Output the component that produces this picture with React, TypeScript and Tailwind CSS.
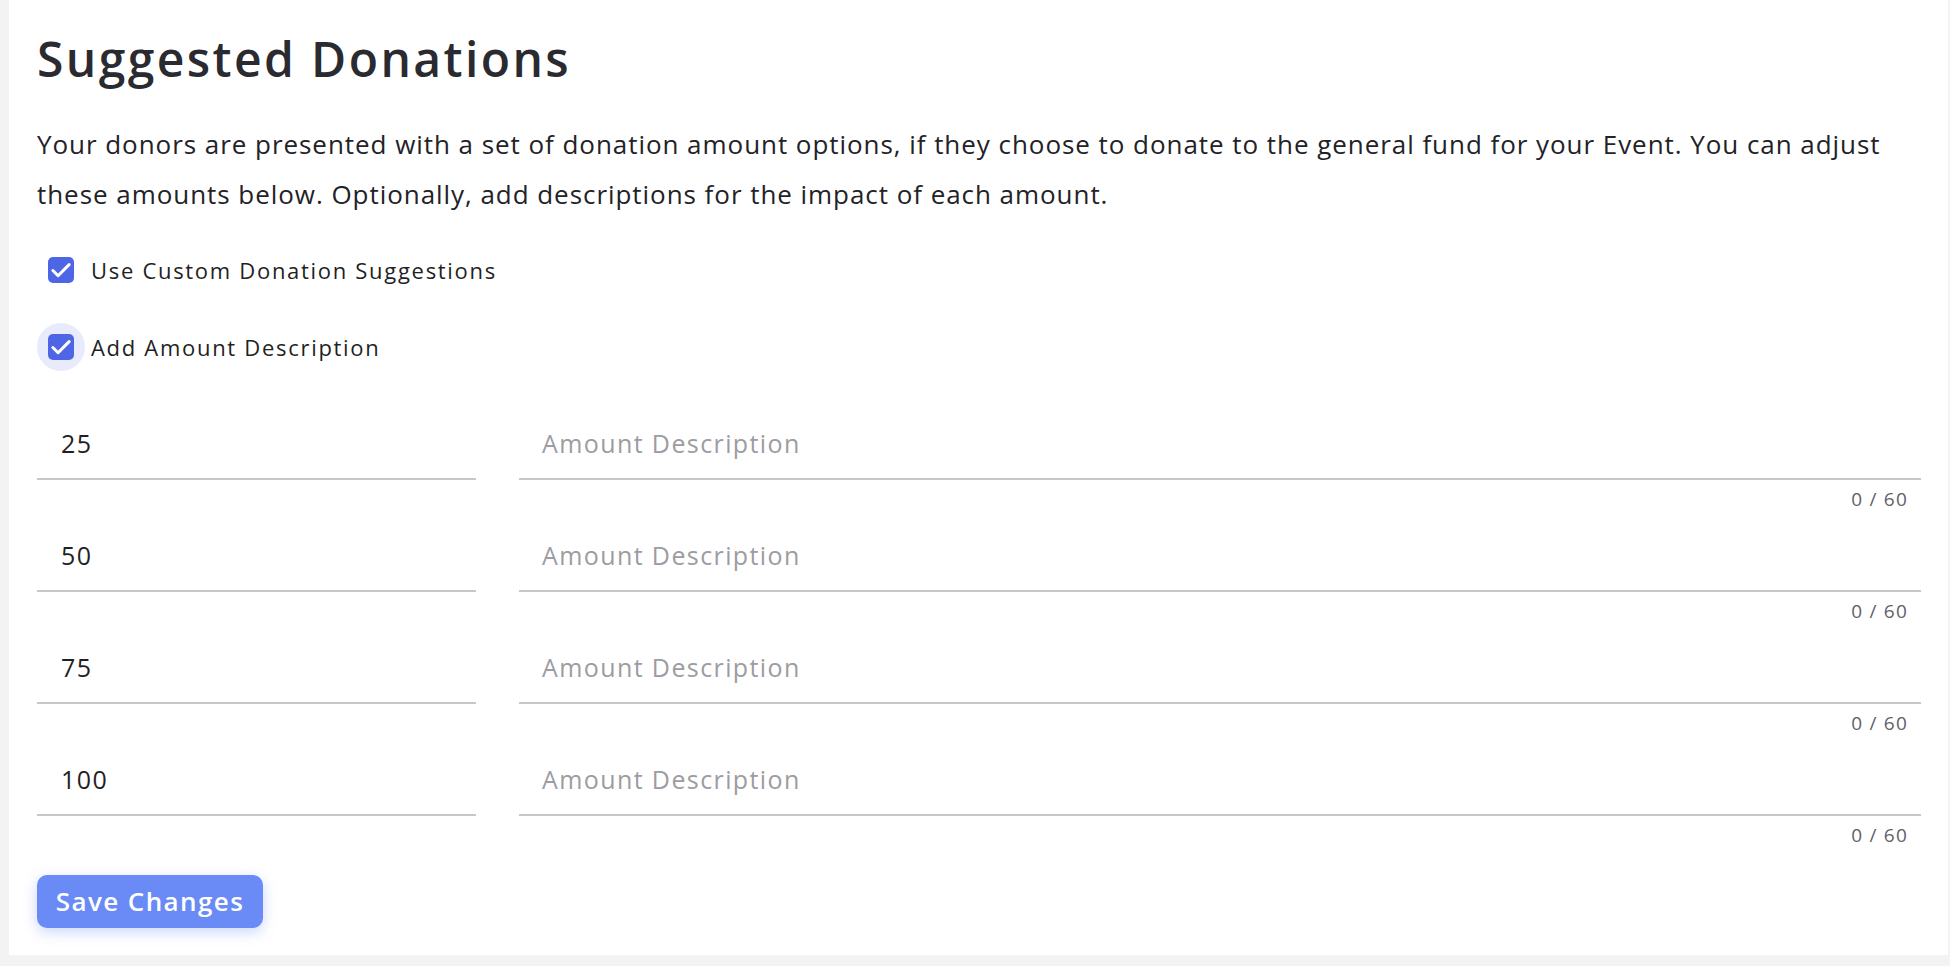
import React, { useState } from 'react';

const font = { fontFamily: '"Open Sans", "Noto Sans", Arial, sans-serif' };

const amounts = ['25', '50', '75', '100'];

function CheckBox({ checked, focused, label, onToggle }: { checked: boolean; focused?: boolean; label: string; onToggle: () => void }) {
  return (
    <label className="flex h-[50px] items-center gap-[6px] cursor-pointer select-none" onClick={onToggle}>
      <span className={`flex h-[48px] w-[48px] items-center justify-center rounded-full ${focused ? 'bg-[#e8ebfb]' : ''}`}>
        <span className={`flex h-[26px] w-[26px] items-center justify-center rounded-[5px] ${checked ? 'bg-[#4e66e6]' : 'border-2 border-[#9a9aa0] bg-white'}`}>
          {checked && (
            <svg viewBox="0 0 24 24" className="h-[26px] w-[26px]" fill="none" stroke="white" strokeWidth="2.8" strokeLinecap="round" strokeLinejoin="round">
              <path d="M4.5 12.5l4.8 4.8L19.5 7" />
            </svg>
          )}
        </span>
      </span>
      <span className="text-[22px] tracking-[1.7px] text-[#1f1f24]">{label}</span>
    </label>
  );
}

export default function App() {
  const [useCustom, setUseCustom] = useState(true);
  const [addDesc, setAddDesc] = useState(true);
  const [values, setValues] = useState(amounts);
  const [descs, setDescs] = useState(['', '', '', '']);

  return (
    <div className="min-h-screen bg-[#f3f3f3] pl-[9px] pr-[2px] pb-[11px]" style={font}>
      <div className="bg-white pl-[28px] pr-[27px] pt-[30px] pb-[27px]">
        <h1 className="text-[48px] leading-[58px] font-semibold tracking-[2.4px] text-[#2a2a31]">Suggested Donations</h1>

        <p className="mt-[31px] text-[26px] leading-[50px] tracking-[0.95px] text-[#222228]">
          Your donors are presented with a set of donation amount options, if they choose to donate to the general fund for your Event. You can adjust
          <br />
          these amounts below. Optionally, add descriptions for the impact of each amount.
        </p>

        <div className="mt-[26px] flex flex-col gap-[27px]">
          <CheckBox checked={useCustom} label="Use Custom Donation Suggestions" onToggle={() => setUseCustom(!useCustom)} />
          <CheckBox checked={addDesc} focused label="Add Amount Description" onToggle={() => setAddDesc(!addDesc)} />
        </div>

        <div className="mt-[35px] flex flex-col gap-[10px]">
          {values.map((v, i) => (
            <div key={i} className="grid grid-cols-[439px_1fr] gap-x-[43px]">
              <input
                value={v}
                onChange={(e) => setValues(values.map((x, j) => (j === i ? e.target.value : x)))}
                className="h-[73px] border-b-2 border-[#c8c8cc] bg-transparent pl-[24px] text-[25px] tracking-[1.4px] text-[#1f1f24] outline-none"
              />
              <div className="flex flex-col">
                <input
                  value={descs[i]}
                  placeholder="Amount Description"
                  maxLength={60}
                  onChange={(e) => setDescs(descs.map((x, j) => (j === i ? e.target.value : x)))}
                  className="h-[73px] border-b-2 border-[#c8c8cc] bg-transparent pl-[23px] text-[25px] tracking-[1.4px] text-[#1f1f24] placeholder:text-[#9c9ca2] outline-none"
                />
                <div className="mt-[9px] h-[20px] pr-[13px] text-right text-[19px] leading-[20px] tracking-[1.2px] text-[#616168]">
                  {descs[i].length} / 60
                </div>
              </div>
            </div>
          ))}
        </div>

        <button className="mt-[30px] h-[53px] w-[226px] rounded-[10px] bg-[#6a8af6] text-[26px] font-semibold tracking-[1.4px] text-white shadow-[0_4px_14px_rgba(106,138,246,0.35)]">
          Save Changes
        </button>
      </div>
    </div>
  );
}
